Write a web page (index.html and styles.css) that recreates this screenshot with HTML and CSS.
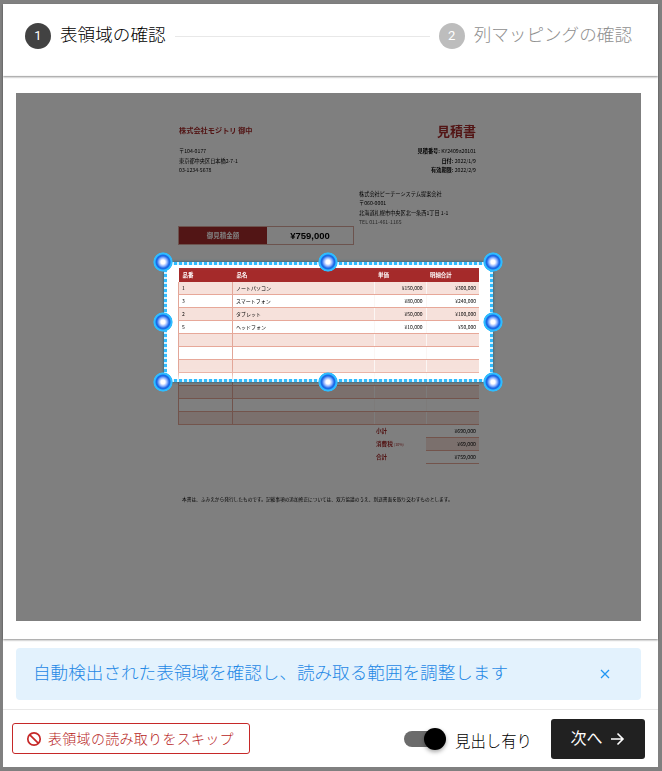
FILE: index.html
```html
<!DOCTYPE html>
<html lang="ja">
<head>
    <meta charset="UTF-8">
    <meta name="viewport" content="width=device-width, initial-scale=1.0">
    <title>表領域の確認</title>
    <link rel="stylesheet" href="styles.css">
</head>
<body>
    <div class="modal">
        <div class="stepper">
            <span class="step-num active">1</span>
            <span class="step-label">表領域の確認</span>
            <span class="step-line"></span>
            <span class="step-num">2</span>
            <span class="step-label muted">列マッピングの確認</span>
        </div>
        <div class="content">
            <div class="image-area">
                <div class="paper">
                    <div class="doc-head">
                        <span class="doc-client">株式会社モジトリ 御中</span>
                        <span class="doc-title">見積書</span>
                    </div>
                    <div class="doc-meta">
                        <div>
                            <p>〒104-0177</p>
                            <p>東京都中央区日本橋2-7-1</p>
                            <p>03-1234-5678</p>
                        </div>
                        <div class="doc-meta-right">
                            <p><b>見積番号:</b> KY2409a20101</p>
                            <p><b>日付:</b> 2022/1/9</p>
                            <p><b>有効期限:</b> 2022/2/9</p>
                        </div>
                    </div>
                    <div class="doc-issuer">
                        <p>株式会社ピーチーシステム提案会社</p>
                        <p>〒060-0001</p>
                        <p>北海道札幌市中央区北一条西1丁目 1-1</p>
                        <p class="thin">TEL 011-461-1165</p>
                    </div>
                    <div class="amount">
                        <span class="amount-label">御見積金額</span>
                        <span class="amount-value">¥759,000</span>
                    </div>
                    <table class="items">
                        <thead>
                            <tr><th>品番</th><th>品名</th><th>単価</th><th>明細合計</th></tr>
                        </thead>
                        <tbody>
                            <tr><td>1</td><td>ノートパソコン</td><td class="num">¥150,000</td><td class="num">¥300,000</td></tr>
                            <tr><td>3</td><td>スマートフォン</td><td class="num">¥80,000</td><td class="num">¥240,000</td></tr>
                            <tr><td>2</td><td>タブレット</td><td class="num">¥50,000</td><td class="num">¥100,000</td></tr>
                            <tr><td>5</td><td>ヘッドフォン</td><td class="num">¥10,000</td><td class="num">¥50,000</td></tr>
                            <tr><td></td><td></td><td></td><td></td></tr>
                            <tr><td></td><td></td><td></td><td></td></tr>
                            <tr><td></td><td></td><td></td><td></td></tr>
                            <tr><td></td><td></td><td></td><td></td></tr>
                            <tr><td></td><td></td><td></td><td></td></tr>
                            <tr><td></td><td></td><td></td><td></td></tr>
                            <tr><td></td><td></td><td></td><td></td></tr>
                        </tbody>
                    </table>
                    <div class="totals">
                        <div class="total-row"><span class="total-label">小計</span><span class="total-value">¥690,000</span></div>
                        <div class="total-row"><span class="total-label">消費税 <small>(10%)</small></span><span class="total-value tint">¥69,000</span></div>
                        <div class="total-row"><span class="total-label">合計</span><span class="total-value">¥759,000</span></div>
                    </div>
                    <p class="doc-note">本書は、ふみえから発行したものです。記載事項の追加修正については、双方協議のうえ、別途書面を取り交わすものとします。</p>
                </div>
                <div class="selection">
                    <div class="selection-edge"></div>
                    <span class="handle tl"></span>
                    <span class="handle tc"></span>
                    <span class="handle tr"></span>
                    <span class="handle ml"></span>
                    <span class="handle mr"></span>
                    <span class="handle bl"></span>
                    <span class="handle bc"></span>
                    <span class="handle br"></span>
                </div>
            </div>
        </div>
        <div class="alert">
            <span class="alert-text">自動検出された表領域を確認し、読み取る範囲を調整します</span>
            <svg class="alert-close" width="10" height="10" viewBox="0 0 10 10"><path d="M1 1 L9 9 M9 1 L1 9" stroke="#2196f3" stroke-width="1.3" fill="none"/></svg>
        </div>
        <div class="footer">
            <button class="skip-btn">
                <svg width="16" height="16" viewBox="0 0 16 16"><circle cx="8" cy="8" r="6.2" stroke="#c62828" stroke-width="1.7" fill="none"/><path d="M3.6 3.6 L12.4 12.4" stroke="#c62828" stroke-width="1.7"/></svg>
                <span class="skip-text">表領域の読み取りをスキップ</span>
            </button>
            <div class="footer-right">
                <div class="toggle"><span class="toggle-thumb"></span></div>
                <span class="toggle-label">見出し有り</span>
                <button class="next-btn">
                    <span class="next-text">次へ</span>
                    <svg width="16" height="16" viewBox="0 0 16 16"><path d="M2 8 H14 M8.5 2.5 L14 8 L8.5 13.5" stroke="#fff" stroke-width="1.6" fill="none"/></svg>
                </button>
            </div>
        </div>
    </div>
</body>
</html>
```

FILE: styles.css
```css
* {
    box-sizing: border-box;
}
body {
    margin: 0;
    height: 771px;
    overflow: hidden;
    background-color: #808080;
    padding: 4px 4px 4px 3px;
    font-family: "Noto Sans CJK JP", "Noto Sans", sans-serif;
    color: #212121;
}
p {
    margin: 0;
}
.modal {
    height: 763px;
    background-color: #fff;
    display: flex;
    flex-direction: column;
}

/* stepper */
.stepper {
    height: 72px;
    padding: 19px 26px 0 22px;
    display: flex;
    align-items: flex-start;
    position: relative;
    z-index: 1;
    box-shadow: 0 1px 2px rgba(0,0,0,0.45);
}
.step-num {
    width: 26px;
    height: 26px;
    border-radius: 50%;
    background-color: #bdbdbd;
    color: #fff;
    font-family: "Roboto", sans-serif;
    font-size: 13px;
    line-height: 26px;
    text-align: center;
    flex-shrink: 0;
}
.step-num.active {
    background-color: #424242;
}
.step-label {
    margin: -2px 0 0 9px;
    font-size: 17.6px;
    line-height: 26px;
    font-weight: 300;
    color: #000;
    white-space: nowrap;
}
.step-label.muted {
    color: #8f8f8f;
}
.step-line {
    flex: 1;
    height: 1px;
    background-color: #e8e8e8;
    margin: 13px 9px 0 9px;
}

/* image */
.content {
    height: 563px;
    padding: 17px 17px 18px 13px;
    box-shadow: 0 1px 2px rgba(0,0,0,0.45);
}
.image-area {
    position: relative;
    overflow: hidden;
    height: 528px;
    background-color: #fff;
}
.paper {
    width: 301px;
    margin: 0 auto;
    padding-top: 30px;
    filter: blur(0.6px);
    font-size: 5.2px;
    line-height: 9.5px;
    color: #000;
}
.doc-head {
    display: flex;
    justify-content: space-between;
    align-items: center;
    height: 16px;
}
.doc-client {
    font-size: 7.2px;
    font-weight: 700;
    color: #a52a2a;
    margin-left: 1px;
}
.doc-title {
    font-size: 13px;
    font-weight: 700;
    color: #a52a2a;
    margin-right: 3px;
}
.doc-meta {
    display: flex;
    justify-content: space-between;
    margin-top: 7px;
    padding: 0 3px 0 1px;
}
.doc-meta-right {
    text-align: right;
}
.doc-issuer {
    margin: 14px 0 0 181px;
}
.doc-issuer .thin {
    color: #555;
}
.amount {
    display: flex;
    width: 176px;
    height: 19px;
    margin-top: -1px;
    border: 1px solid #d9a79c;
}
.amount-label {
    width: 88px;
    background-color: #a52a2a;
    color: #fff;
    text-align: center;
    font-size: 6.5px;
    line-height: 17px;
    font-weight: 700;
}
.amount-value {
    flex: 1;
    text-align: center;
    font-family: "Liberation Sans", sans-serif;
    font-size: 9.5px;
    line-height: 17px;
    font-weight: 700;
}
.items {
    width: 301px;
    margin-top: 23px;
    border-collapse: collapse;
    table-layout: fixed;
}
.items th:nth-child(1) {
    width: 54px;
}
.items th:nth-child(3) {
    width: 52px;
}
.items th:nth-child(4) {
    width: 53px;
}
.items th {
    height: 14px;
    padding: 0 4px;
    background-color: #a52a2a;
    color: #fff;
    font-size: 5.4px;
    line-height: 8px;
    font-weight: 700;
    text-align: left;
}
.items td {
    height: 13px;
    padding: 0 3px;
    border-bottom: 1px solid #e7a899;
    line-height: 8px;
    font-size: 5px;
}
.items td:first-child {
    border-left: 1px solid #e2a698;
    border-right: 1px solid #e2a698;
}
.items td:last-child,
.items td:nth-child(3) {
    border-left: 1px solid #fbf6f4;
}
.items td.num {
    text-align: right;
}
.items tbody tr:nth-child(odd) td {
    background-color: #f6e1db;
}
.total-row {
    display: flex;
    justify-content: flex-end;
    height: 13px;
}
.total-label {
    width: 50px;
    color: #a52a2a;
    font-size: 5.6px;
    line-height: 12px;
    font-weight: 700;
}
.total-label small {
    font-size: 3.6px;
    font-weight: 400;
}
.total-value {
    width: 53px;
    padding-right: 3px;
    text-align: right;
    line-height: 12px;
    border-bottom: 1px solid #e7a899;
}
.total-value.tint {
    background-color: #f6e1db;
}
.doc-note {
    margin: 31px 0 0 4px;
    white-space: nowrap;
    font-size: 4.7px;
}

/* selection overlay */
.selection {
    position: absolute;
    left: 148px;
    top: 169px;
    width: 329px;
    height: 120px;
    box-shadow: 0 0 0 2000px rgba(0,0,0,0.5), 0 0 3px #2fbcff, inset 0 -3px 8px 2px #fff;
}
.selection-edge {
    height: 100%;
    background-image:
        repeating-linear-gradient(90deg, #2fbcff 0 3px, #d8f3ff 3px 5px),
        repeating-linear-gradient(90deg, #2fbcff 0 3px, #d8f3ff 3px 5px),
        repeating-linear-gradient(0deg, #2fbcff 0 3px, #d8f3ff 3px 5px),
        repeating-linear-gradient(0deg, #2fbcff 0 3px, #d8f3ff 3px 5px);
    background-size: 100% 3px, 100% 3px, 3px 100%, 3px 100%;
    background-position: 0 0, 0 100%, 0 0, 100% 0;
    background-repeat: no-repeat;
}
.handle {
    position: absolute;
    width: 20px;
    height: 20px;
    border-radius: 50%;
    background: radial-gradient(circle closest-side, #fff 0, #fff 20%, #8fb2ff 42%, #1a68e6 62%, #1a6ee8 70%, #2fbcff 80%, #2fbcff 92%, rgba(47,188,255,0) 100%);
}
.tl, .tc, .tr { top: -10px; }
.ml, .mr { top: 50px; }
.bl, .bc, .br { bottom: -10px; }
.tl, .ml, .bl { left: -11px; }
.tc, .bc { left: 154px; }
.tr, .mr, .br { right: -10px; }

/* alert */
.alert {
    height: 52px;
    margin: 9px 17px 0 13px;
    padding: 0 18px 0 17px;
    background-color: #e3f2fd;
    border-radius: 4px;
    display: flex;
    align-items: center;
    justify-content: space-between;
    color: #1e88e5;
    font-size: 17.6px;
    font-weight: 300;
}
.alert-text {
    margin-bottom: 5px;
}
.alert-close {
    margin-right: 13px;
}

/* footer */
.footer {
    margin-top: 9px;
    height: 58px;
    border-top: 1px solid #e8e8e8;
    padding: 9px 13px 0 9px;
    display: flex;
    justify-content: space-between;
    align-items: flex-start;
}
.skip-btn {
    width: 238px;
    height: 31px;
    margin-top: 4px;
    padding: 0 0 0 13px;
    border: 1px solid #c62828;
    border-radius: 3px;
    background-color: #fff;
    color: #b71c1c;
    font-family: inherit;
    font-size: 14px;
    font-weight: 300;
    letter-spacing: 0.3px;
    display: flex;
    align-items: center;
    gap: 6px;
}
.skip-text {
    margin-bottom: 2px;
}
.footer-right {
    display: flex;
    align-items: center;
}
.toggle {
    position: relative;
    width: 32px;
    height: 16px;
    border-radius: 8px;
    background-color: #6b6b6b;
}
.toggle-thumb {
    position: absolute;
    left: 20px;
    top: -3px;
    width: 22px;
    height: 22px;
    border-radius: 50%;
    background-color: #000;
    box-shadow: 0 2px 4px rgba(0,0,0,0.35);
}
.toggle-label {
    margin: 2px 19px 0 19px;
    font-size: 15.4px;
    font-weight: 300;
    color: #000;
}
.next-btn {
    width: 94px;
    height: 40px;
    padding: 0;
    border: none;
    border-radius: 3px;
    background-color: #212121;
    color: #fff;
    font-family: inherit;
    font-size: 16px;
    font-weight: 400;
    display: flex;
    align-items: center;
    justify-content: center;
    gap: 6px;
}
.next-text {
    margin: 0 0 4px -1px;
}
```
